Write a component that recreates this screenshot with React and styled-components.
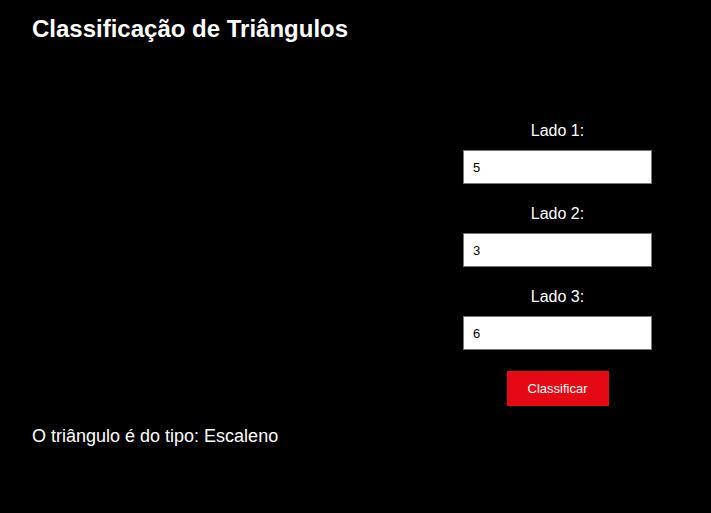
import React, { useState } from "react";
import styled, { createGlobalStyle } from "styled-components";

const Global = createGlobalStyle`
  html, body { margin: 0; padding: 0; background: #000; }
  body { font-family: "Liberation Sans", Arial, sans-serif; color: #fff; }
`;

const Page = styled.div`
  min-height: 513px;
  background: #000;
  padding: 15px 32px 0 32px;
  box-sizing: border-box;
`;

const Title = styled.h1`
  margin: 0;
  font-size: 24px;
  line-height: 27px;
  font-weight: bold;
`;

const FormArea = styled.div`
  display: flex;
  justify-content: flex-end;
  margin-top: 80px;
  padding-right: 27px;
`;

const Form = styled.form`
  width: 189px;
  display: flex;
  flex-direction: column;
  align-items: center;
  gap: 21px;
`;

const Field = styled.div`
  display: flex;
  flex-direction: column;
  align-items: center;
  width: 100%;
  gap: 10px;
`;

const Label = styled.label`
  font-size: 16px;
  line-height: 18px;
`;

const Input = styled.input`
  width: 100%;
  height: 34px;
  box-sizing: border-box;
  border: 1px solid #767676;
  background: #fff;
  color: #000;
  padding: 0 9px;
  font-family: "Liberation Sans", Arial, sans-serif;
  font-size: 13px;
  outline: none;
`;

const Button = styled.button`
  width: 102px;
  height: 35px;
  border: none;
  background: #e50914;
  color: #fff;
  font-family: "Liberation Sans", Arial, sans-serif;
  font-size: 13px;
  cursor: pointer;
`;

const Result = styled.p`
  margin: 20px 0 0 0;
  font-size: 18px;
  line-height: 21px;
`;

export default function App() {
  const [sides, setSides] = useState(["5", "3", "6"]);
  return (
    <>
      <Global />
      <Page>
        <Title>Classificação de Triângulos</Title>
        <FormArea>
          <Form onSubmit={(e) => e.preventDefault()}>
            {sides.map((v, i) => (
              <Field key={i}>
                <Label htmlFor={`lado${i + 1}`}>Lado {i + 1}:</Label>
                <Input
                  id={`lado${i + 1}`}
                  type="text"
                  value={v}
                  onChange={(e) => {
                    const n = [...sides];
                    n[i] = e.target.value;
                    setSides(n);
                  }}
                />
              </Field>
            ))}
            <Button type="submit">Classificar</Button>
          </Form>
        </FormArea>
        <Result>O triângulo é do tipo: Escaleno</Result>
      </Page>
    </>
  );
}
